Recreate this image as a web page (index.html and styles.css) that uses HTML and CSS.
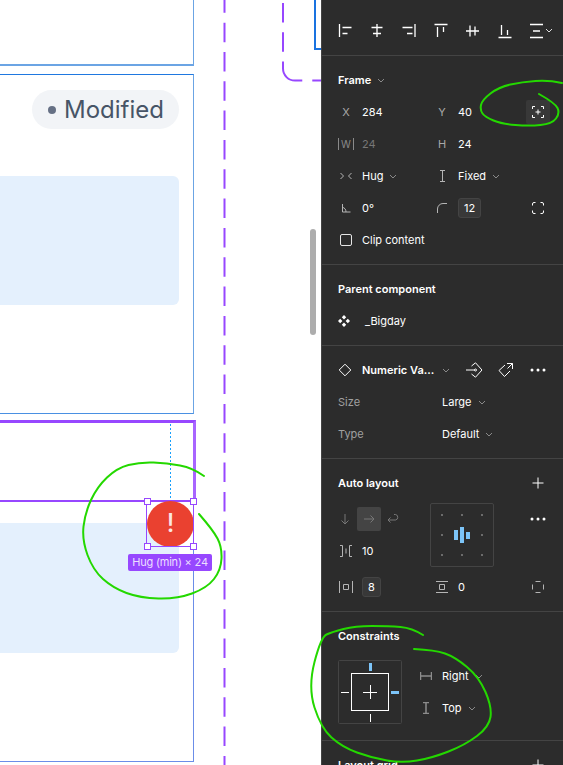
FILE: index.html
```html
<!DOCTYPE html>
<html>

<head>
    <title>Frame properties</title>
    <link rel="stylesheet" href="styles.css">
</head>

<body>
    <div class="app">
        <!-- Canvas: everything in here sits on a free canvas -->
        <div class="canvas">
            <div class="frame frame-one"></div>
            <div class="frame frame-two"></div>
            <div class="frame frame-three"></div>
            <div class="frame frame-four"></div>
            <div class="frame frame-edge"></div>

            <div class="pill"><span class="pill-dot"></span>Modified</div>
            <div class="block block-one"></div>
            <div class="block block-two"></div>

            <svg class="canvas-lines" width="322" height="765">
                <path class="dash" d="M224.5 -6.7V765" />
                <path class="dash dash-corner" d="M283 3V68.6A12 12 0 0 0 295 80.6H321" />
                <path class="measure" d="M170.5 424V498" />
            </svg>

            <div class="badge">!</div>
            <div class="selection">
                <span class="handle handle-tl"></span>
                <span class="handle handle-tr"></span>
                <span class="handle handle-bl"></span>
                <span class="handle handle-br"></span>
            </div>
            <div class="size-tag">Hug (min) × 24</div>

            <div class="scrollbar"></div>
        </div>

        <!-- Properties panel -->
        <div class="panel">
            <section class="section align-bar">
                <span class="cell"><svg class="ico ico-bar" width="16" height="16"><path d="M2.500 1v13M5.500 4.500h9M5.500 10.500h5" /></svg></span>
                <span class="cell"><svg class="ico ico-bar" width="16" height="16"><path d="M8 1v13M2.500 4.500h11M4 10.500h8" /></svg></span>
                <span class="cell"><svg class="ico ico-bar" width="16" height="16"><path d="M14 1v13M1.500 4.500h10M6 10.500h5.500" /></svg></span>
                <span class="cell"><svg class="ico ico-bar" width="16" height="16"><path d="M1.500 1.500h13M4.500 4v10M10.500 4v5" /></svg></span>
                <span class="cell"><svg class="ico ico-bar" width="16" height="16"><path d="M1 8h13M5 2.500v11M10 3.500v9" /></svg></span>
                <span class="cell"><svg class="ico ico-bar" width="16" height="16"><path d="M1.500 14.500h13M4.500 2v10M10.500 7v5" /></svg></span>
                <span class="cell cell-more">
                    <svg class="ico ico-bar" width="14" height="16"><path d="M1 1.500h13M4 8h7M1 14.500h13" /></svg>
                    <svg class="chev chev-light" width="8" height="5"><path d="M1 1l3 3 3-3" /></svg>
                </span>
            </section>

            <section class="section">
                <div class="head"><b>Frame</b><svg class="chev" width="8" height="5"><path d="M1 1l3 3 3-3" /></svg></div>
                <div class="row">
                    <span class="label">X</span><span>284</span>
                    <span class="label">Y</span><span>40</span>
                    <span class="tool tool-on">
                        <svg class="ico" width="12" height="12"><path d="M.5 3V.5H3M9 .5h2.500V3M11.500 9v2.500H9M3 11.500H.5V9M6 3.500v5M3.500 6h5" /></svg>
                    </span>
                </div>
                <div class="row">
                    <span class="label label-w">W</span><span class="muted">24</span>
                    <span class="label">H</span><span>24</span>
                </div>
                <div class="row">
                    <span class="label"><svg class="ico ico-dim" width="12" height="8"><path d="M.5 1L3.500 4 .5 7M11.500 1L8.500 4l3 3" /></svg></span>
                    <span class="value">Hug<svg class="chev" width="8" height="5"><path d="M1 1l3 3 3-3" /></svg></span>
                    <span class="label"><svg class="ico ico-dim" width="7" height="12"><path d="M1 .5h5M3.500 .5v11M1 11.500h5" /></svg></span>
                    <span class="value">Fixed<svg class="chev" width="8" height="5"><path d="M1 1l3 3 3-3" /></svg></span>
                </div>
                <div class="row">
                    <span class="label"><svg class="ico ico-dim" width="10" height="10"><path d="M1.500 1v8h8M1.500 4.500c2 0 3.500 2 3.500 4.500" /></svg></span>
                    <span>0°</span>
                    <span class="label"><svg class="ico ico-dim" width="10" height="10"><path d="M.5 10V6A5.500 5.500 0 0 1 6 .5h4" /></svg></span>
                    <span class="chip">12</span>
                    <span class="tool">
                        <svg class="ico" width="12" height="12"><path d="M.5 3.500V2A1.500 1.500 0 0 1 2 .5h1.500M8.500 .5H10A1.500 1.500 0 0 1 11.500 2v1.500M11.500 8.500V10A1.500 1.500 0 0 1 10 11.500H8.500M3.500 11.500H2A1.500 1.500 0 0 1 .5 10V8.500" /></svg>
                    </span>
                </div>
                <div class="row row-check">
                    <span class="check"></span><span>Clip content</span>
                </div>
            </section>

            <section class="section">
                <div class="head"><b>Parent component</b></div>
                <div class="head item">
                    <svg class="ico-fill" width="12" height="12"><path d="M6 0l2.200 2.200L6 4.400 3.800 2.200zM2.200 3.800L4.400 6 2.200 8.200 0 6zM9.800 3.800L12 6 9.800 8.200 7.600 6zM6 7.600l2.200 2.200L6 12 3.800 9.800z" /></svg>
                    <span>_Bigday</span>
                </div>
            </section>

            <section class="section">
                <div class="head comp">
                    <svg class="ico comp-icon" width="14" height="14"><path d="M7 1.200L12.800 7 7 12.800 1.200 7z" /></svg>
                    <b class="comp-name">Numeric Va...</b>
                    <svg class="chev comp-chev" width="8" height="5"><path d="M1 1l3 3 3-3" /></svg>
                    <svg class="ico comp-swap" width="16" height="16"><path d="M0 8h9M5.500 4L9.500 .8 16 8l-6.500 7.200L5.500 12" /><circle cx="9.500" cy="8" r="1" /></svg>
                    <svg class="ico comp-tag" width="16" height="16"><path d="M7 3L1 8.500l5.500 6L12 9M9 1.500h5.500V7M14.500 1.500L9.500 6.500" /></svg>
                    <svg class="dots comp-dots" width="16" height="4"><circle cx="2" cy="2" r="1.500" /><circle cx="8" cy="2" r="1.500" /><circle cx="14" cy="2" r="1.500" /></svg>
                </div>
                <div class="prop"><span class="prop-name">Size</span><span class="value">Large<svg class="chev" width="8" height="5"><path d="M1 1l3 3 3-3" /></svg></span></div>
                <div class="prop"><span class="prop-name">Type</span><span class="value">Default<svg class="chev" width="8" height="5"><path d="M1 1l3 3 3-3" /></svg></span></div>
            </section>

            <section class="section">
                <div class="head head-split"><b>Auto layout</b><svg class="ico plus" width="12" height="12"><path d="M6 .5v11M.5 6h11" /></svg></div>
                <div class="auto-grid">
                    <div class="flow">
                        <span class="flow-btn"><svg class="ico ico-faint" width="10" height="12"><path d="M5 1v10M1.500 7.500L5 11l3.500-3.500" /></svg></span>
                        <span class="flow-btn flow-on"><svg class="ico ico-faint" width="12" height="10"><path d="M1 5h10M7.500 1.500L11 5 7.500 8.500" /></svg></span>
                        <span class="flow-btn"><svg class="ico ico-faint" width="12" height="12"><path d="M3.500 4.500L1 7l2.500 2.500M1 7h7.500a2.800 2.800 0 0 0 0-5.500H7" /></svg></span>
                    </div>
                    <div class="align-box">
                        <svg width="62" height="62">
                            <g class="align-dots">
                                <circle cx="11" cy="11" r="1" /><circle cx="31" cy="11" r="1" /><circle cx="51" cy="11" r="1" />
                                <circle cx="11" cy="31" r="1" /><circle cx="51" cy="31" r="1" />
                                <circle cx="11" cy="51" r="1" /><circle cx="31" cy="51" r="1" /><circle cx="51" cy="51" r="1" />
                            </g>
                            <g class="align-bars">
                                <rect x="23" y="26" width="4" height="10" />
                                <rect x="29" y="23" width="4" height="16" />
                                <rect x="35" y="28" width="4" height="7" />
                            </g>
                        </svg>
                    </div>
                    <div class="auto-more">
                        <svg class="dots" width="16" height="4"><circle cx="2" cy="2" r="1.500" /><circle cx="8" cy="2" r="1.500" /><circle cx="14" cy="2" r="1.500" /></svg>
                    </div>
                    <div class="gap-row">
                        <span class="label"><svg class="ico ico-dim" width="14" height="12"><path d="M1 .5h2.500v11H1M13 .5h-2.500v11H13M7 3.500v5" /></svg></span>
                        <span>10</span>
                    </div>
                </div>
                <div class="row row-padding">
                    <span class="label"><svg class="ico ico-dim" width="14" height="12"><path d="M.5 0v12M13.500 0v12M4.500 3.500h5v5h-5z" /></svg></span>
                    <span class="chip">8</span>
                    <span class="label"><svg class="ico ico-dim" width="12" height="12"><path d="M0 .5h12M0 11.500h12M3.500 3.500h5v5h-5z" /></svg></span>
                    <span>0</span>
                    <span class="tool">
                        <svg class="ico ico-dim" width="12" height="12"><path d="M3.500 .5h5M3.500 11.500h5M.5 3.500v5M11.500 3.500v5" /></svg>
                    </span>
                </div>
            </section>

            <section class="section section-constraints">
                <div class="head"><b>Constraints</b></div>
                <div class="constraints">
                    <svg class="constraint-box" width="64" height="64">
                        <rect class="box-outer" x=".5" y=".5" width="63" height="63" rx="1" />
                        <rect class="box-inner" x="13.500" y="13.500" width="37" height="37" />
                        <path class="box-line" d="M32.500 25v14M25 32.500h14M3 32.500h8M32.500 54v8" />
                        <rect class="box-on" x="31" y="3" width="3" height="8" />
                        <rect class="box-on" x="53" y="31" width="8" height="3" />
                    </svg>
                    <div class="constraint-rows">
                        <div class="constraint-row">
                            <svg class="ico ico-grey" width="12" height="8"><path d="M.5 0v8M11.500 0v8M0 4h12" /></svg>
                            <span class="value">Right<svg class="chev" width="8" height="5"><path d="M1 1l3 3 3-3" /></svg></span>
                        </div>
                        <div class="constraint-row">
                            <svg class="ico ico-grey" width="12" height="12"><path d="M3 .5h6M6 .5v11M3 11.500h6" /></svg>
                            <span class="value">Top<svg class="chev" width="8" height="5"><path d="M1 1l3 3 3-3" /></svg></span>
                        </div>
                    </div>
                </div>
            </section>

            <section class="section section-last">
                <div class="head head-split"><b>Layout grid</b><svg class="ico plus" width="12" height="12"><path d="M6 .5v11M.5 6h11" /></svg></div>
            </section>
        </div>

        <!-- Green marker notes drawn on top of the screenshot -->
        <svg class="marker" width="563" height="765">
            <path d="M204 476Q193 468 180 465.500Q167 463 153.500 462.500Q140 462 128.500 465Q117 468 107 477.500Q97 487 91 500Q85 513 83.500 526.500Q82 540 87.500 555Q93 570 103 579Q113 588 126.500 593Q140 598 158.500 598.500Q177 599 192 593.500Q207 588 214 579Q221 570 221.500 558.500Q222 547 217.500 538.500Q213 530 199 514" />
            <path d="M562 83Q549 80 535.500 81Q522 82 510.500 84.500Q499 87 490.500 93.500Q482 100 481 105Q480 110 482.500 113.500Q485 117 493.500 120.500Q502 124 515.500 125Q529 126 540.500 125Q552 124 556 118.500Q560 113 557.500 108Q555 103 539 94" />
            <path d="M423 635Q412 628 400.500 627Q389 626 372 626Q355 626 343.500 629Q332 632 326.500 634.500Q321 637 314.500 662Q308 687 314.500 707.500Q321 728 331.500 737.500Q342 747 357 752.500Q372 758 387 760.500Q402 763 417 760.500Q432 758 448.500 751.500Q465 745 477 736Q489 727 490.500 717Q492 707 485.500 692Q479 677 467 667Q455 657 445 653.500Q435 650 414 649" />
        </svg>
    </div>
</body>

</html>
```

FILE: styles.css
```css
html, body {
    margin: 0;
    padding: 0;
    background-color: #ffffff;
}

.app {
    position: relative;
    display: flex;
    width: 563px;
    height: 765px;
    overflow: hidden;
    font-family: Inter, "Liberation Sans", sans-serif;
}

/* Canvas */
.canvas {
    position: relative;
    flex: 0 0 321px;
    height: 765px;
    overflow: hidden;
    background-color: #ffffff;
}

.frame {
    position: absolute;
    left: -4px;
    width: 198px;
    box-sizing: border-box;
}

.frame-one {
    top: -10px;
    height: 76px;
    border-right: 1px solid #6ba4e4;
    border-bottom: 2px solid #6ba4e4;
}

.frame-two {
    top: 74px;
    height: 340px;
    border-top: 1px solid #1f78e0;
    border-right: 1px solid #6ba4e4;
    border-bottom: 1px solid #4a90e2;
}

.frame-three {
    top: 420px;
    width: 200px;
    height: 82px;
    border-top: 3px solid #9747ff;
    border-right: 3px solid #a865ff;
    border-bottom: 2px solid #9747ff;
}

.frame-four {
    top: 502px;
    height: 260px;
    border-right: 1px solid #6b8de8;
    border-bottom: 1px solid #6b8de8;
}

.frame-edge {
    left: 314px;
    top: -4px;
    width: 12px;
    height: 54px;
    border-left: 2px solid #1a73e0;
    border-bottom: 2px solid #1a73e0;
}

.pill {
    position: absolute;
    left: 32px;
    top: 90px;
    display: flex;
    align-items: center;
    gap: 8px;
    box-sizing: border-box;
    width: 147px;
    height: 39px;
    padding-left: 16px;
    border-radius: 20px;
    background-color: #f2f4f7;
    color: #475467;
    font-size: 24px;
    font-weight: 400;
}

.pill-dot {
    width: 8px;
    height: 8px;
    border-radius: 50%;
    background-color: #667085;
}

.block {
    position: absolute;
    left: -8px;
    width: 187px;
    height: 129px;
    border-radius: 6px;
    background-color: #e4f0fd;
}

.block-one { top: 176px; }
.block-two { top: 523px; height: 130px; }

.canvas-lines {
    position: absolute;
    left: 0;
    top: 0;
}

.dash {
    fill: none;
    stroke: #9747ff;
    stroke-width: 2;
    stroke-dasharray: 19.5 9.83;
}

.dash-corner {
    stroke-dasharray: 19.5 9.8 19.5 9.8 33 10 20;
}

.measure {
    fill: none;
    stroke: #18a0fb;
    stroke-width: 1;
    stroke-dasharray: 2 2;
}

.badge {
    position: absolute;
    left: 147px;
    top: 501px;
    width: 47px;
    height: 46px;
    border-radius: 50%;
    background-color: #ea4130;
    color: #fbe5e2;
    font-size: 25px;
    font-weight: 500;
    line-height: 45px;
    text-align: center;
}

.selection {
    position: absolute;
    left: 146px;
    top: 500px;
    width: 48px;
    height: 47px;
    box-sizing: border-box;
    border: 1px solid #9747ff;
}

.handle {
    position: absolute;
    width: 7px;
    height: 7px;
    box-sizing: border-box;
    border: 1px solid #9747ff;
    background-color: #ffffff;
}

.handle-tl { left: -3px; top: -3px; }
.handle-tr { right: -4px; top: -3px; }
.handle-bl { left: -3px; bottom: -4px; }
.handle-br { right: -4px; bottom: -4px; }

.size-tag {
    position: absolute;
    left: 128px;
    top: 554px;
    width: 84px;
    height: 17px;
    border-radius: 2px;
    background-color: #9747ff;
    color: #ecdfff;
    font-size: 11px;
    letter-spacing: -0.2px;
    line-height: 17px;
    text-align: center;
    white-space: nowrap;
}

.scrollbar {
    position: absolute;
    left: 310px;
    top: 229px;
    width: 6px;
    height: 106px;
    border-radius: 3px;
    background-color: #adadad;
}

/* Panel */
.panel {
    flex: 0 0 242px;
    box-sizing: border-box;
    height: 765px;
    border-left: 1px solid #444444;
    background-color: #2c2c2c;
    color: #ffffff;
    font-size: 11px;
    line-height: 16px;
    overflow: hidden;
}

.section {
    padding: 8px 0;
    border-bottom: 1px solid #444444;
}

.section-constraints {
    padding-bottom: 16px;
}

.section-last {
    border-bottom: none;
}

.align-bar {
    display: flex;
    align-items: center;
    box-sizing: border-box;
    height: 56px;
    padding: 6px 0 0 7px;
}

.cell {
    display: flex;
    justify-content: center;
    align-items: center;
    width: 32px;
}

.cell-more {
    justify-content: flex-start;
    gap: 2px;
    padding-left: 8px;
}

.ico {
    flex: none;
    fill: none;
    stroke: #ffffff;
    stroke-width: 1;
}

.ico-bar { stroke-width: 1.3; }
.ico-dim { stroke: #b5b5b5; }
.ico-faint { stroke: #777777; }
.ico-grey { stroke: #8c8c8c; stroke-width: 1.5; }

.ico-fill {
    flex: none;
    fill: #ffffff;
}

.chev {
    flex: none;
    margin-left: 6px;
    fill: none;
    stroke: #8a8a8a;
    stroke-width: 1;
}

.chev-light {
    margin-left: 0;
    stroke: #dddddd;
}

.dots {
    flex: none;
    fill: #ffffff;
}

.head {
    display: flex;
    align-items: center;
    height: 32px;
    padding-left: 16px;
}

.head b {
    font-weight: 600;
}

.head-split {
    justify-content: space-between;
    padding-right: 19px;
}

.item {
    gap: 15px;
    padding-left: 16px;
}

.row {
    display: grid;
    grid-template-columns: 24px 72px 24px 64px 32px;
    align-items: center;
    height: 32px;
    padding-left: 16px;
}

.row-check {
    grid-template-columns: 24px auto;
}

.label {
    display: flex;
    justify-content: center;
    align-items: center;
    width: 16px;
    color: #a8a8a8;
}

.label-w {
    box-sizing: border-box;
    height: 12px;
    border-left: 1px solid #8a8a8a;
    border-right: 1px solid #8a8a8a;
    font-size: 10px;
    color: #8a8a8a;
}

.muted {
    color: #777777;
}

.value {
    display: flex;
    align-items: center;
}

.tool {
    display: flex;
    justify-content: center;
    align-items: center;
    width: 24px;
    height: 24px;
    margin-left: 4px;
    border-radius: 2px;
}

.tool-on {
    background-color: #383838;
}

.chip {
    justify-self: start;
    padding: 1px 5px;
    border: 1px solid #444444;
    border-radius: 3px;
    background-color: #383838;
}

.check {
    width: 12px;
    height: 12px;
    margin-left: 2px;
    box-sizing: border-box;
    border: 1px solid #e6e6e6;
    border-radius: 2px;
}

/* Component row */
.comp-icon { margin-right: 10px; }
.comp-name { width: 71px; white-space: nowrap; }
.comp-chev { margin-left: 9px; }
.comp-swap { margin-left: 16px; }
.comp-tag { margin-left: 16px; }
.comp-dots { margin-left: 16px; }

.prop {
    display: grid;
    grid-template-columns: 104px auto;
    align-items: center;
    height: 32px;
    padding-left: 16px;
}

.prop-name {
    color: #a0a0a0;
}

/* Auto layout */
.auto-grid {
    display: grid;
    grid-template-columns: 92px 64px 1fr;
    grid-template-rows: 32px 32px;
    margin-top: 4px;
    padding-left: 16px;
}

.flow {
    display: flex;
    align-items: center;
    margin-left: -5px;
}

.flow-btn {
    display: flex;
    justify-content: center;
    align-items: center;
    width: 24px;
    height: 24px;
    border-radius: 2px;
}

.flow-on {
    background-color: #444444;
}

.align-box {
    grid-row: 1 / span 2;
    grid-column: 2;
    box-sizing: border-box;
    width: 64px;
    height: 64px;
    border: 1px solid #444444;
    border-radius: 2px;
}

.align-box svg {
    display: block;
}

.align-dots { fill: #808080; }
.align-bars { fill: #7cc4f8; }

.auto-more {
    display: flex;
    align-items: center;
    justify-content: flex-start;
    padding-left: 36px;
}

.gap-row {
    display: grid;
    grid-template-columns: 24px auto;
    grid-column: 1;
    grid-row: 2;
    align-items: center;
}

.row-padding {
    margin-top: 4px;
}

/* Constraints */
.constraints {
    display: flex;
    margin-top: 8px;
    padding-left: 16px;
}

.constraint-box {
    flex: none;
}

.box-outer {
    fill: none;
    stroke: #444444;
}

.box-inner {
    fill: none;
    stroke: #ffffff;
}

.box-line {
    fill: none;
    stroke: #ffffff;
}

.box-on {
    fill: #7cc4f8;
}

.constraint-rows {
    margin-left: 18px;
}

.constraint-row {
    display: flex;
    align-items: center;
    gap: 10px;
    height: 32px;
}

/* Marker */
.marker {
    position: absolute;
    left: 0;
    top: 0;
    pointer-events: none;
}

.marker path {
    fill: none;
    stroke: #24d800;
    stroke-width: 2;
    stroke-linecap: round;
}
```
